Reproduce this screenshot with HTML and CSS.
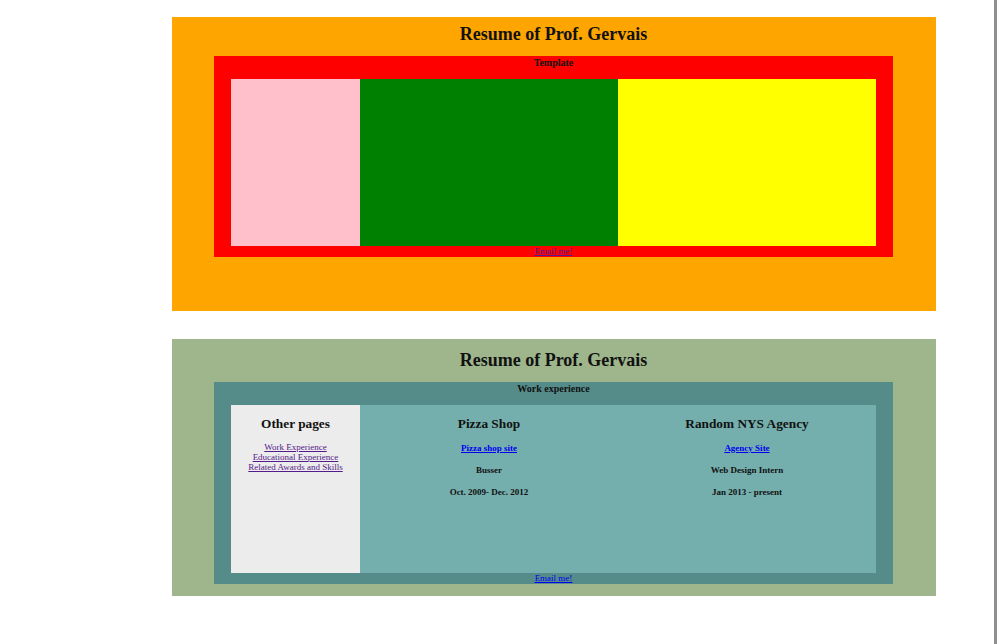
FILE: index.html
```html
<!DOCTYPE html>
<html>
<head>
<meta charset="utf-8">
<title>Resume of Prof. Gervais</title>
<link rel="stylesheet" href="styles.css">
</head>
<body>
<div class="page">
  <section class="resume template">
    <h2 class="title">Resume of Prof. Gervais</h2>
    <div class="frame">
      <div class="frame-head">Template</div>
      <div class="row">
        <div class="col col-side"></div>
        <div class="col col-main"></div>
        <div class="col col-extra"></div>
      </div>
      <div class="frame-foot"><a href="#" class="mail visited">Email me!</a></div>
    </div>
  </section>

  <section class="resume work">
    <h2 class="title">Resume of Prof. Gervais</h2>
    <div class="frame">
      <div class="frame-head">Work experience</div>
      <div class="row">
        <div class="col col-side">
          <h3 class="col-title">Other pages</h3>
          <nav class="pages">
            <a href="#">Work Experience</a>
            <a href="#">Educational Experience</a>
            <a href="#">Related Awards and Skills</a>
          </nav>
        </div>
        <div class="col col-main">
          <h3 class="col-title">Pizza Shop</h3>
          <a href="#" class="site">Pizza shop site</a>
          <p class="info">Busser</p>
          <p class="info">Oct. 2009- Dec. 2012</p>
        </div>
        <div class="col col-extra">
          <h3 class="col-title">Random NYS Agency</h3>
          <a href="#" class="site">Agency Site</a>
          <p class="info">Web Design Intern</p>
          <p class="info">Jan 2013 - present</p>
        </div>
      </div>
      <div class="frame-foot"><a href="#" class="mail">Email me!</a></div>
    </div>
  </section>
</div>
</body>
</html>
```

FILE: styles.css
```css
html {
  margin: 0;
  padding: 0;
  height: 100%;
  border-right: 3px solid #8f8f8f;
  box-sizing: border-box;
  background: #ffffff;
}

body {
  margin: 0;
  font-family: "Liberation Serif", "Times New Roman", serif;
  color: #111;
}

.page {
  padding: 17px 0 0 172px;
  display: flex;
  flex-direction: column;
  gap: 28px;
}

.resume {
  width: 764px;
  box-sizing: border-box;
  padding: 0 43px 0 42px;
}

.template {
  background: #ffa500;
  height: 294px;
  padding-top: 6px;
}

.work {
  background: #9fb68c;
  padding-top: 10px;
  padding-bottom: 12px;
}

.title {
  margin: 0 0 11px;
  font-size: 18px;
  line-height: 22px;
  font-weight: bold;
  text-align: center;
}

.frame {
  padding: 0 17px;
}

.template .frame { background: #ff0000; }
.work .frame { background: #558c89; }

.frame-head {
  height: 23px;
  box-sizing: border-box;
  padding-top: 1px;
  font-size: 10px;
  line-height: 12px;
  font-weight: bold;
  text-align: center;
}

.row {
  display: flex;
  height: 167px;
}

.work .row { height: 168px; }

.col-side { width: 129px; }
.col-main { width: 258px; }
.col-extra { width: 258px; }

.template .col-side { background: #ffc0cb; }
.template .col-main { background: #008000; }
.template .col-extra { background: #ffff00; }

.work .col-side { background: #ececec; }
.work .col-main,
.work .col-extra { background: #74afad; }

.work .col {
  display: flex;
  flex-direction: column;
  align-items: center;
  padding-top: 11px;
  box-sizing: border-box;
}

.col-title {
  margin: 0;
  font-size: 13.3px;
  line-height: 16px;
  font-weight: bold;
}

.pages {
  display: flex;
  flex-direction: column;
  align-items: center;
  margin-top: 10px;
}

.pages a {
  font-size: 9px;
  line-height: 10px;
  color: #551a8b;
}

.site {
  margin-top: 11px;
  font-size: 9px;
  line-height: 10px;
  font-weight: bold;
  color: #0000ee;
}

.info {
  margin: 12px 0 0;
  font-size: 9px;
  line-height: 10px;
  font-weight: bold;
}

.frame-foot {
  height: 11px;
  font-size: 9px;
  line-height: 11px;
  text-align: center;
}

.mail { color: #0000ee; }
.mail.visited { color: #551a8b; }
```
